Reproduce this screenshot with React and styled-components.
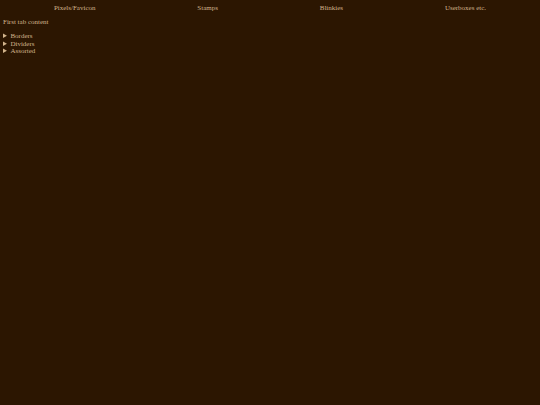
import React, { useState } from 'react';
import styled, { createGlobalStyle } from 'styled-components';

const GlobalStyle = createGlobalStyle`
  html, body {
    margin: 0;
    padding: 0;
    background: #2c1601;
  }
  body {
    font-family: "Liberation Serif", "Times New Roman", serif;
    font-size: 7px;
    color: #d2b48c;
  }
`;

const Page = styled.div`
  min-height: 100vh;
  padding: 0 3px;
  box-sizing: border-box;
  background: #2c1601;
`;

const TabBar = styled.div`
  display: flex;
`;

const Tab = styled.button`
  flex: 1 1 auto;
  background: none;
  border: none;
  padding: 4px 0 2px;
  font: inherit;
  color: #d2b48c;
  cursor: pointer;
`;

const Panel = styled.div`
  padding: 4px 0;
`;

const Heading = styled.p`
  margin: 0 0 7px;
`;

const Section = styled.details`
  line-height: 7.5px;
`;

const Summary = styled.summary`
  cursor: pointer;
  list-style-position: inside;
`;

const tabs = ['Pixels/Favicon', 'Stamps', 'Blinkies', 'Userboxes etc.'];
const contents = [
  'First tab content',
  'Second tab content',
  'Third tab content',
  'Fourth tab content',
];

export default function App() {
  const [active, setActive] = useState(0);

  return (
    <Page>
      <GlobalStyle />
      <TabBar>
        {tabs.map((t, i) => (
          <Tab key={t} onClick={() => setActive(i)}>
            {t}
          </Tab>
        ))}
      </TabBar>
      <Panel>
        <Heading>{contents[active]}</Heading>
        {active === 0 && (
          <>
            <Section>
              <Summary>Borders</Summary>
            </Section>
            <Section>
              <Summary>Dividers</Summary>
            </Section>
            <Section>
              <Summary>Assorted</Summary>
            </Section>
          </>
        )}
      </Panel>
    </Page>
  );
}
